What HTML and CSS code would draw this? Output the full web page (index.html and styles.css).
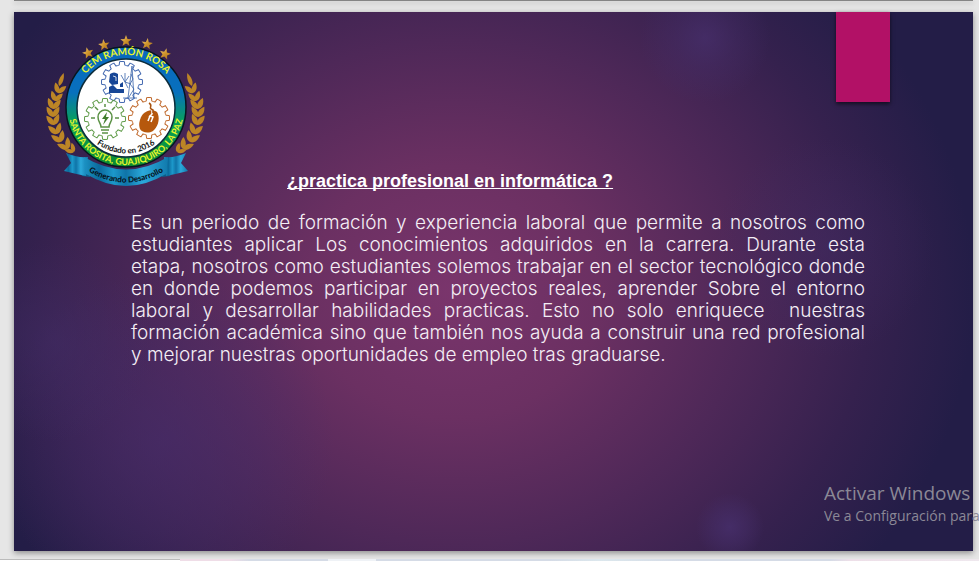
FILE: index.html
```html
<!DOCTYPE html>
<html lang="es">
<head>
<meta charset="utf-8">
<title>Práctica profesional en informática</title>
<link rel="stylesheet" href="styles.css">
</head>
<body>
<div class="viewer">
  <div class="previous-page"></div>
  <main class="slide">
    <header class="slide-header">
      <svg class="crest" viewBox="36 26 180 170" role="img" aria-label="CEM Ramón Rosa">
        <defs>
          <linearGradient id="ring" x1="0" y1="0" x2="0" y2="1">
            <stop offset="0" stop-color="#0869bd"/><stop offset=".38" stop-color="#0870bd"/>
            <stop offset=".62" stop-color="#08a05c"/><stop offset="1" stop-color="#0b8a30"/>
          </linearGradient>
          <linearGradient id="band" x1="0" y1="0" x2="1" y2="0">
            <stop offset="0" stop-color="#1b93c4"/><stop offset=".18" stop-color="#0b6a9c"/>
            <stop offset=".35" stop-color="#1c98ca"/><stop offset=".5" stop-color="#0f74a8"/>
            <stop offset=".7" stop-color="#2ba9da"/><stop offset="1" stop-color="#117aad"/>
          </linearGradient>
          <linearGradient id="gold" x1="0" y1="0" x2="1" y2="1">
            <stop offset="0" stop-color="#f3cf7a"/><stop offset=".5" stop-color="#cf952d"/><stop offset="1" stop-color="#a86e1a"/>
          </linearGradient>
          <path id="leaf" d="M0 0C-4-3-3-8 0-12C3-8 4-3 0 0Z"/>
          <g id="pair"><use href="#leaf" transform="rotate(-32)"/><use href="#leaf" transform="rotate(32)"/></g>
          <g id="branch" fill="#bd8526">
            <use href="#leaf" transform="translate(59 86) rotate(20) scale(.8 1.150)"/>
            <use href="#pair" transform="translate(58 93) rotate(18) scale(.9)"/>
            <use href="#pair" transform="translate(55 101) rotate(14) scale(.9)"/>
            <use href="#pair" transform="translate(53 109) rotate(8)"/>
            <use href="#pair" transform="translate(53 117) rotate(0)"/>
            <use href="#pair" transform="translate(54 125) rotate(-8)"/>
            <use href="#pair" transform="translate(57 134) rotate(-16)"/>
            <use href="#pair" transform="translate(61 142) rotate(-24)"/>
            <use href="#pair" transform="translate(68 149) rotate(-34)"/>
            <use href="#pair" transform="translate(74 152) rotate(-46) scale(.8)"/>
          </g>
          <path id="star" d="M0-6L1.500-1.900L5.700-1.800L2.400.8L3.500 4.800L0 2.500L-3.500 4.800L-2.400.8L-5.700-1.800L-1.500-1.900Z"/>
          <path id="tooth" fill="none" d="M-4.400-16.420A17 17 0 0 1-2.800-16.770L-2.400-20.370A20.500 20.500 0 0 1 2.400-20.370L2.800-16.770A17 17 0 0 1 4.400-16.420"/>
          <g id="gear">
            <use href="#tooth"/><use href="#tooth" transform="rotate(30)"/><use href="#tooth" transform="rotate(60)"/>
            <use href="#tooth" transform="rotate(90)"/><use href="#tooth" transform="rotate(120)"/><use href="#tooth" transform="rotate(150)"/>
            <use href="#tooth" transform="rotate(180)"/><use href="#tooth" transform="rotate(210)"/><use href="#tooth" transform="rotate(240)"/>
            <use href="#tooth" transform="rotate(270)"/><use href="#tooth" transform="rotate(300)"/><use href="#tooth" transform="rotate(330)"/>
          </g>
          <path id="arc-top" d="M74 107A52 52 0 0 1 178 107"/>
          <path id="arc-bottom" d="M68 107A58 58 0 0 0 184 107"/>
          <path id="arc-founded" d="M90 139Q126 168 162 139"/>
          <path id="arc-motto" d="M80 166Q126 199 172 166"/>
        </defs>

        <use href="#branch"/>
        <use href="#branch" transform="translate(251 0) scale(-1 1)"/>
        <circle cx="126" cy="107" r="60" fill="url(#ring)" stroke="#07161f" stroke-width="1.500"/>
        <circle cx="126" cy="108" r="49" fill="#fff" stroke="#0d2c3a" stroke-width="1.500"/>
        <g fill="url(#gold)">
          <use href="#star" transform="translate(88 53) rotate(-15)"/>
          <use href="#star" transform="translate(104 45) rotate(-8)"/>
          <use href="#star" transform="translate(126 41)"/>
          <use href="#star" transform="translate(147 44) rotate(8)"/>
          <use href="#star" transform="translate(165 54) rotate(15)"/>
        </g>

        <g stroke="#4268b0"><use href="#gear" transform="translate(122 82)"/></g>
        <g stroke="#5f9b48"><use href="#gear" transform="translate(105 119)"/></g>
        <g stroke="#c0692c"><use href="#gear" transform="translate(149 118)"/></g>

        <path fill="#174696" d="M110 74Q114 71 118 74V84L112 85L109 82ZM109 87L113 85L117 89H124V93H109ZM120 84L123 82V87H120Z"/>
        <path fill="none" stroke="#fff" stroke-width=".8" d="M113 76L116 77V81"/>
        <path fill="none" stroke="#3863aa" stroke-width=".8" d="M132 66L128 98M132 66L134 98M131 74L133 79L130 84L134 89L129 97M123 98H137M125 82L121 75M125 82L125 73M125 82L129 76M125 82L131 84M125 82L128 88"/>

        <g fill="none" stroke="#5b9145" stroke-width="1.500">
          <path d="M101 127C101 123 98 122 98 117A7 7 0 0 1 112 117C112 122 109 123 109 127ZM101 130H109M102 133H108"/>
          <path d="M91 118H95M115 118H119M105 104V107M95 107L98 110M115 107L112 110"/>
        </g>
        <path fill="#3f7d2c" d="M107 112L102 119H105L103 125L109 117H106Z"/>

        <path fill="#b6580d" d="M143 114C147 110 153 109 157 112C160 117 159 125 154 130C150 134 142 133 140 129C138 124 140 118 143 114Z"/>
        <path fill="none" stroke="#fff" stroke-width="1.500" d="M152 109V114L149 117M148 121L150 116L153 117L151 122"/>
        <path fill="none" stroke="#a7520f" stroke-width="1.500" d="M153 113V110C147 108 154 106 149 103"/>

        <path fill="#0c5c88" d="M79 158L90 164V177L82 176L78 169ZM173 158L162 164V177L170 176L174 169Z"/>
        <path fill="url(#band)" d="M66 153Q77 158 88 157L86 176Q76 174 64 171L71 163Z"/>
        <path fill="url(#band)" d="M186 153Q175 158 164 157L166 176Q176 174 188 171L181 163Z"/>
        <path fill="url(#band)" d="M84 157Q126 182 168 157L166 174Q126 198 86 174Z"/>

        <text class="crest-name"><textPath href="#arc-top" startOffset="50%" text-anchor="middle">CEM RAMÓN ROSA</textPath></text>
        <text class="crest-place"><textPath href="#arc-bottom" startOffset="50%" text-anchor="middle">SANTA ROSITA, GUAJIQUIRO, LA PAZ</textPath></text>
        <text class="crest-founded"><textPath href="#arc-founded" startOffset="50%" text-anchor="middle">Fundado en 2016</textPath></text>
        <text class="crest-motto"><textPath href="#arc-motto" startOffset="50%" text-anchor="middle">Generando Desarrollo</textPath></text>
      </svg>
      <h1 class="title">¿practica profesional en informática ?</h1>
      <div class="marker"></div>
    </header>
    <p class="body-text">
      <span>Es un periodo de formación y experiencia laboral que permite a nosotros como</span>
      <span>estudiantes aplicar Los conocimientos adquiridos en la carrera. Durante esta</span>
      <span>etapa, nosotros como estudiantes solemos trabajar en el sector tecnológico donde</span>
      <span>en donde podemos participar en proyectos reales, aprender Sobre el entorno</span>
      <span>laboral y desarrollar habilidades practicas. Esto no solo enriquece &nbsp;nuestras</span>
      <span>formación académica sino que también nos ayuda a construir una red profesional</span>
      <span>y mejorar nuestras oportunidades de empleo tras graduarse.</span>
    </p>
  </main>
  <div class="next-page"><div class="status"></div></div>
  <aside class="watermark">
    <p class="watermark-title">Activar Windows</p>
    <p class="watermark-text">Ve a Configuración para</p>
  </aside>
</div>
</body>
</html>
```

FILE: styles.css
```css
* {
  box-sizing: border-box;
}

body {
  margin: 0;
  background: #e6e6e6;
}

h1,
p {
  margin: 0;
}

.viewer {
  position: relative;
  display: flex;
  flex-direction: column;
  min-height: 100vh;
  overflow: hidden;
}

.previous-page {
  height: 1px;
  margin: 0 6px 11px 14px;
  background: #858585;
  box-shadow: 0 2px 5px #0005;
}

.slide {
  flex: 1;
  margin: 0 6px 0 14px;
  background:
    radial-gradient(circle at 691px 26px, #472f6cbb 0, #472f6c55 30px, transparent 65px),
    radial-gradient(circle at 716px 515px, #472f6ccc 0, #472f6c66 18px, transparent 34px),
    radial-gradient(circle at 810px 235px, #432d6766 0, transparent 110px),
    radial-gradient(circle at 40px 330px, #432d6788 0, transparent 100px),
    radial-gradient(circle at 150px 430px, #472d6c99 0, #472d6c55 90px, transparent 170px),
    radial-gradient(ellipse 520px 450px at 440px 280px, #7a356c 0, #6b3062 28%, #4e2858 56%, #35214e 80%, #231d47 100%);
  box-shadow: 0 2px 6px #0006;
}

.slide-header {
  display: flex;
  align-items: flex-start;
  height: 184px;
  padding: 0 83px 0 22px;
}

.crest {
  flex: none;
  width: 180px;
  height: 170px;
  margin-top: 14px;
}

.crest text {
  font-family: Lato, sans-serif;
  font-weight: 700;
}

.crest .crest-name {
  font-size: 10px;
  fill: #e8f52c;
}

.crest .crest-place {
  font-size: 9px;
  fill: #e8f52c;
}

.crest .crest-founded {
  font-size: 8px;
  fill: #111;
}

.crest .crest-motto {
  font-size: 8px;
  font-weight: 900;
  fill: #061522;
}

.title {
  align-self: flex-end;
  margin: 0 0 4px 71px;
  color: #fff;
  font: 700 18px/22px "Liberation Sans", Arial, sans-serif;
  text-decoration: underline;
  text-decoration-skip-ink: none;
  white-space: nowrap;
}

.marker {
  width: 54px;
  height: 90px;
  margin-left: auto;
  background: #b21166;
  box-shadow: 0 2px 4px #0009;
}

.body-text {
  margin: 16px 108px 0 117px;
  color: #f4eef5;
  font: 300 19px/22px "Century Gothic", Inter, sans-serif;
}

.body-text span {
  display: block;
  text-align-last: justify;
  white-space: nowrap;
}

.body-text span:last-child {
  text-align-last: left;
}

.next-page {
  height: 2px;
  margin-top: 8px;
  background: linear-gradient(90deg, #efdde7 180px, #efdde7 230px, #d5dbe6 250px, #d5dbe6 328px, #eff2f6 328px, #eff2f6 376px, #d5dbe6 376px, #d5dbe6 550px, #dce7ed 600px, #d5dbe6 680px, #d5dbe6 830px, #eddfe8 850px, #efe8ee);
}

.status {
  width: 180px;
  height: 2px;
  border-top: 1px solid #bbb;
  background: #fff;
}

.watermark {
  position: absolute;
  right: 0;
  bottom: 35px;
  width: 155px;
  overflow: hidden;
  color: #8b8896;
  font-family: "Segoe UI", "Open Sans", sans-serif;
  white-space: nowrap;
}

.watermark-title {
  font-size: 19px;
  line-height: 25px;
}

.watermark-text {
  font-size: 14px;
  line-height: 20px;
}
```
